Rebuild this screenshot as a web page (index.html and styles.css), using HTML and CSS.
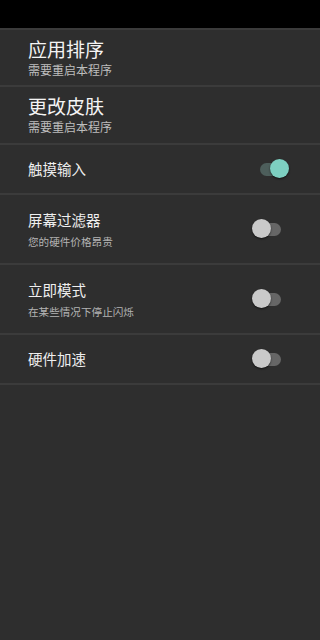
FILE: index.html
```html
<!DOCTYPE html>
<html lang="zh">
<head>
<meta charset="utf-8">
<link rel="stylesheet" href="styles.css">
</head>
<body>
<div class="status"></div>
<div class="list">
  <div class="row head">
    <div class="texts">
      <div class="big">应用排序</div>
      <div class="hsub">需要重启本程序</div>
    </div>
  </div>
  <div class="row head2">
    <div class="texts">
      <div class="big">更改皮肤</div>
      <div class="hsub">需要重启本程序</div>
    </div>
  </div>
  <div class="row short">
    <div class="texts"><div class="title">触摸输入</div></div>
    <div class="switch on"><div class="track"></div><div class="thumb"></div></div>
  </div>
  <div class="row tall">
    <div class="texts">
      <div class="title">屏幕过滤器</div>
      <div class="sub">您的硬件价格昂贵</div>
    </div>
    <div class="switch"><div class="track"></div><div class="thumb"></div></div>
  </div>
  <div class="row tall">
    <div class="texts">
      <div class="title">立即模式</div>
      <div class="sub">在某些情况下停止闪烁</div>
    </div>
    <div class="switch"><div class="track"></div><div class="thumb"></div></div>
  </div>
  <div class="row short">
    <div class="texts"><div class="title">硬件加速</div></div>
    <div class="switch"><div class="track"></div><div class="thumb"></div></div>
  </div>
</div>
</body>
</html>
```
FILE: styles.css
```css
html, body {
  margin: 0;
  padding: 0;
  background: #2e2e2e;
  width: 320px;
  height: 640px;
  overflow: hidden;
  font-family: "Noto Sans CJK SC", "Noto Sans", sans-serif;
}
.status {
  height: 28px;
  background: #000;
}
.list {
  border-top: 2px solid #3b3b3b;
}
.row {
  display: flex;
  align-items: center;
  padding-left: 28px;
  padding-right: 30px;
  border-bottom: 2px solid #3b3b3b;
  box-sizing: border-box;
}
.head { height: 57px; padding-bottom: 2px; }
.head2 { height: 58px; padding-bottom: 2px; }
.short { height: 50px; }
.tall { height: 70px; }
.texts {
  flex: 1;
  display: flex;
  flex-direction: column;
}
.big {
  color: #f4f4f4;
  font-size: 19px;
  line-height: 26px;
}
.hsub {
  color: #bdbdbd;
  font-size: 12px;
  line-height: 16px;
  margin-top: 0;
}
.title {
  color: #efefef;
  font-size: 14.5px;
  line-height: 20px;
}
.sub {
  color: #b4b4b4;
  font-size: 10.6px;
  line-height: 14px;
  margin-top: 5px;
}
.switch {
  position: relative;
  width: 39px;
  height: 20px;
  display: flex;
  align-items: center;
}
.track {
  margin-left: 9px;
  width: 21px;
  height: 13px;
  border-radius: 7px;
  background: #666666;
}
.thumb {
  position: absolute;
  top: 0;
  left: 1px;
  width: 19px;
  height: 19px;
  border-radius: 50%;
  background: #c9c9c9;
  box-shadow: 0 1px 2px rgba(0,0,0,0.6);
}
.switch.on .track {
  background: #4d5e5b;
}
.switch.on .thumb {
  left: 19px;
  background: #7dd0c1;
}
```
